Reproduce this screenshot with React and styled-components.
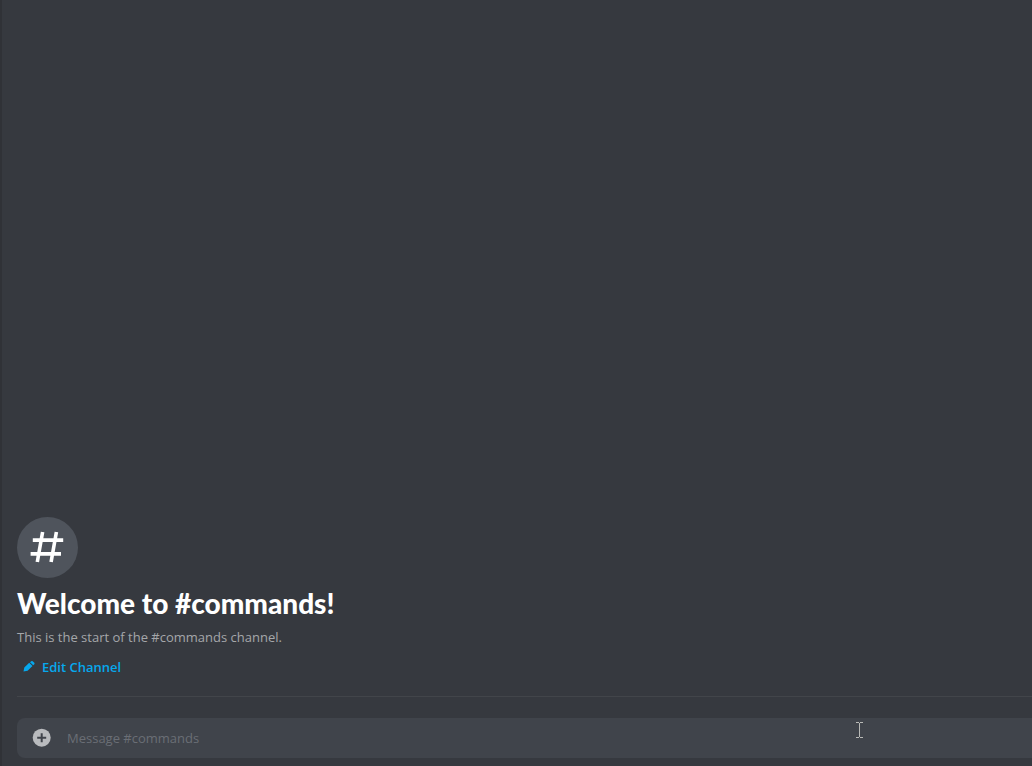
import React from "react";
import styled, { createGlobalStyle } from "styled-components";

const GlobalStyle = createGlobalStyle`
  *, *::before, *::after { box-sizing: border-box; }
  body {
    margin: 0;
    background: #36393f;
    font-family: "Open Sans", "Liberation Sans", sans-serif;
  }
`;

const ChatPane = styled.main`
  display: flex;
  flex-direction: column;
  justify-content: flex-end;
  min-height: 100vh;
  padding: 0 0 8px 15px;
  background: #36393f;
  border-left: 2px solid #303237;
`;

const Welcome = styled.section`
  display: flex;
  flex-direction: column;
  align-items: flex-start;
  padding-bottom: 19px;
  border-bottom: 1px solid #42454a;
`;

const ChannelBadge = styled.div`
  display: flex;
  width: 61px;
  height: 61px;
  border-radius: 50%;
  background: #4f545c;
`;

const Title = styled.h1`
  margin: 7px 0;
  font-family: Lato, "Open Sans", sans-serif;
  font-size: 28px;
  line-height: 36px;
  font-weight: 900;
  color: #ffffff;
`;

const Description = styled.p`
  margin: 0;
  font-size: 13px;
  line-height: 18px;
  color: #a5a7aa;
`;

const EditButton = styled.button`
  display: flex;
  align-items: center;
  gap: 6px;
  margin: 11px 0 0;
  padding: 0 6px;
  border: 0;
  background: none;
  font: 600 13px/20px "Open Sans", sans-serif;
  color: #06a8ed;
  cursor: pointer;
`;

const Composer = styled.form`
  position: relative;
  display: flex;
  align-items: center;
  height: 40px;
  margin-top: 21px;
  padding-left: 15px;
  gap: 15px;
  border-radius: 8px 0 0 8px;
  background: #40444b;
`;

const AttachButton = styled.button`
  display: flex;
  padding: 0;
  border: 0;
  background: none;
  cursor: pointer;
`;

const MessageInput = styled.input`
  flex: 1;
  min-width: 0;
  padding: 0;
  border: 0;
  outline: 0;
  background: none;
  font: 400 13px/20px "Open Sans", sans-serif;
  color: #dcddde;
  &::placeholder { color: #6a6e75; opacity: 1; }
`;

const TextCursor = styled.svg`
  position: absolute;
  top: 4px;
  right: 169px;
  pointer-events: none;
`;

export default function App() {
  return (
    <>
      <GlobalStyle />
      <ChatPane>
        <Welcome>
          <ChannelBadge>
            <svg width="61" height="61" viewBox="0 0 61 61" fill="none" stroke="#fff" strokeWidth="3.6" aria-hidden="true">
              <path d="M25.6 15L20.3 45M39.4 15L34.1 45M15.8 23.1H46.2M13.6 36.9H44" />
            </svg>
          </ChannelBadge>
          <Title>Welcome to #commands!</Title>
          <Description>This is the start of the #commands channel.</Description>
          <EditButton type="button">
            <svg width="13" height="13" viewBox="0 0 13 13" fill="#06a8ed" aria-hidden="true">
              <path d="M.5 10.4L1.3 6.6L6.2 1.8L9.5 4.9L4.6 9.8Z M7 1.2L8.2.3Q9-.2 9.7.3L11.3 1.8Q11.8 2.5 11.3 3.2L10.2 4.3Z" />
            </svg>
            Edit Channel
          </EditButton>
        </Welcome>
        <Composer onSubmit={(e) => e.preventDefault()}>
          <AttachButton type="button" aria-label="Attach a file">
            <svg width="20" height="20" viewBox="0 0 20 20" aria-hidden="true">
              <circle cx="9.7" cy="9.7" r="9" fill="#b9bbbe" />
              <path d="M9.7 5.2V14.2M5.2 9.7H14.2" stroke="#40444b" strokeWidth="2" />
            </svg>
          </AttachButton>
          <MessageInput type="text" aria-label="Message #commands" placeholder="Message #commands" />
          <TextCursor width="7" height="16" viewBox="0 0 7 16" fill="none" stroke="#b9bab7" shapeRendering="crispEdges" aria-hidden="true">
            <path d="M0 .5H3M4 .5H7M3.5 1V15M0 15.5H3M4 15.5H7" />
          </TextCursor>
        </Composer>
      </ChatPane>
    </>
  );
}
